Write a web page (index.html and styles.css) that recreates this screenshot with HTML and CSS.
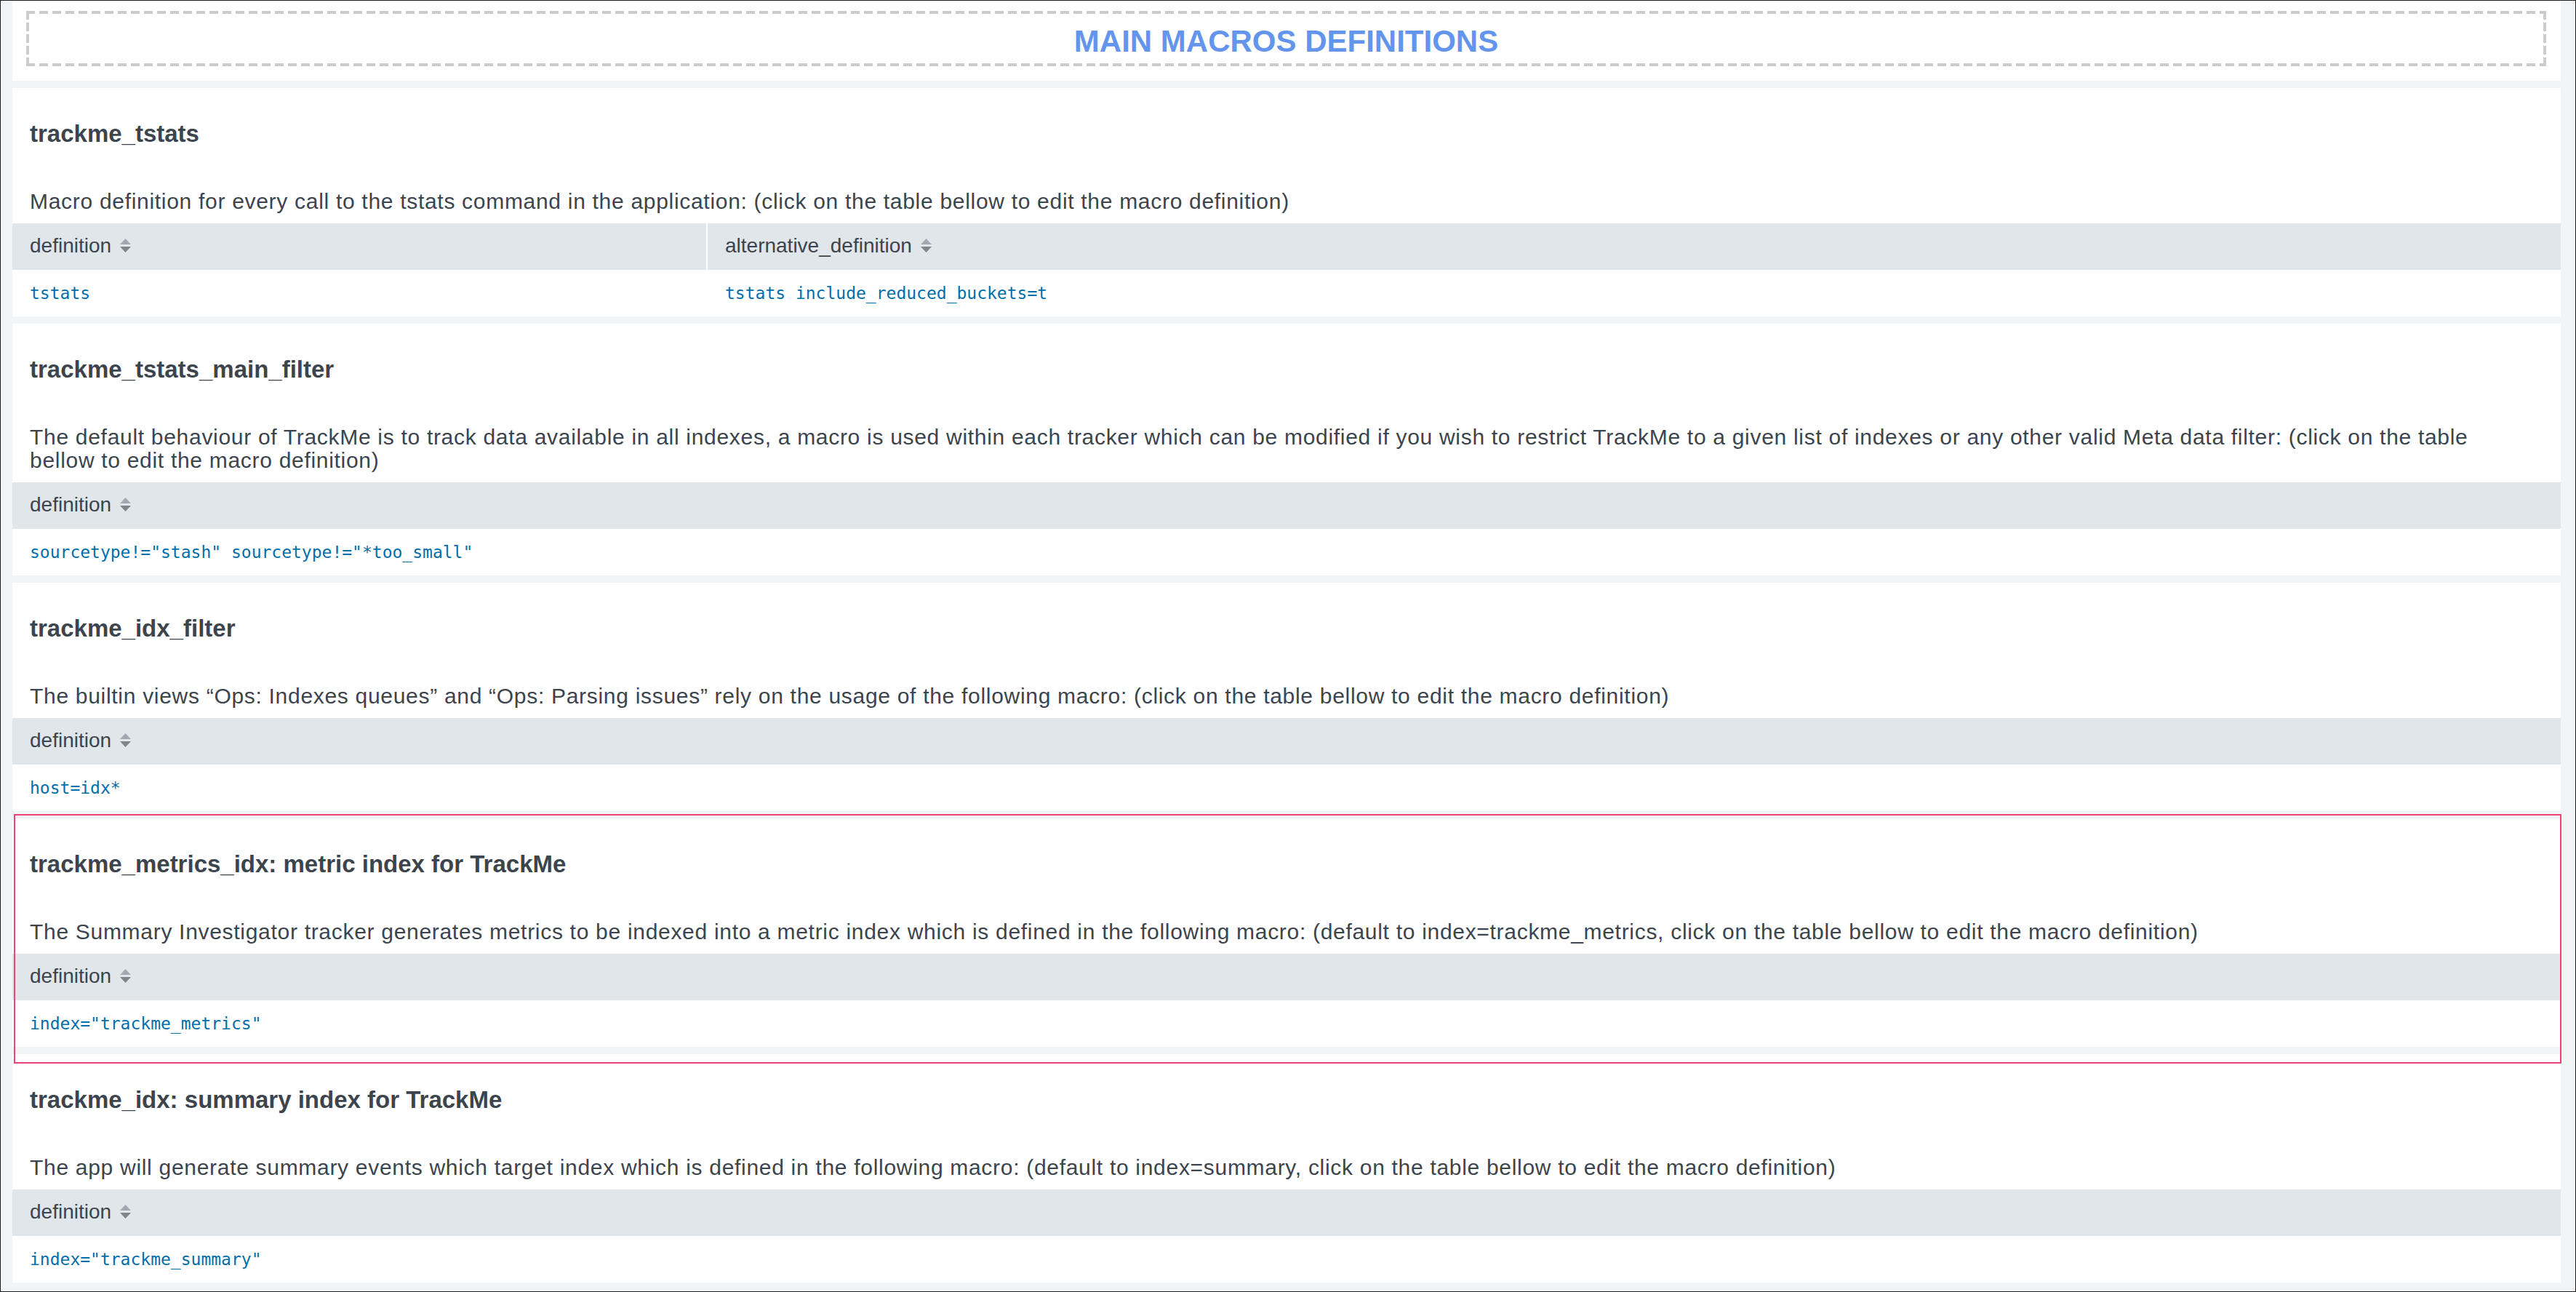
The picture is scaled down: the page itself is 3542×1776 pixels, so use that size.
FILE: index.html
```html
<!DOCTYPE html>
<html lang="en">
<head>
<meta charset="utf-8">
<title>Main macros definitions</title>
<link rel="stylesheet" href="styles.css">
</head>
<body>
<div class="page">
  <section class="panel title-panel">
    <div class="titlebox"><h1 class="title">MAIN MACROS DEFINITIONS</h1></div>
  </section>

  <section class="panel">
    <h2 class="heading">trackme_tstats</h2>
    <p class="desc">Macro definition for every call to the tstats command in the application: (click on the table bellow to edit the macro definition)</p>
    <div class="grid two-col">
      <div class="th">definition<svg class="sort" width="15" height="19" viewBox="0 0 15 19"><path d="M7.5 0L15 8H0Z" class="up"/><path d="M0 11H15L7.5 19Z" class="down"/></svg></div>
      <div class="th th-next">alternative_definition<svg class="sort" width="15" height="19" viewBox="0 0 15 19"><path d="M7.5 0L15 8H0Z" class="up"/><path d="M0 11H15L7.5 19Z" class="down"/></svg></div>
      <div class="td">tstats</div>
      <div class="td td-next">tstats include_reduced_buckets=t</div>
    </div>
  </section>

  <section class="panel">
    <h2 class="heading">trackme_tstats_main_filter</h2>
    <p class="desc">The default behaviour of TrackMe is to track data available in all indexes, a macro is used within each tracker which can be modified if you wish to restrict TrackMe to a given list of indexes or any other valid Meta data filter: (click on the table bellow to edit the macro definition)</p>
    <div class="grid">
      <div class="th">definition<svg class="sort" width="15" height="19" viewBox="0 0 15 19"><path d="M7.5 0L15 8H0Z" class="up"/><path d="M0 11H15L7.5 19Z" class="down"/></svg></div>
      <div class="td">sourcetype!="stash" sourcetype!="*too_small"</div>
    </div>
  </section>

  <section class="panel">
    <h2 class="heading">trackme_idx_filter</h2>
    <p class="desc">The builtin views “Ops: Indexes queues” and “Ops: Parsing issues” rely on the usage of the following macro: (click on the table bellow to edit the macro definition)</p>
    <div class="grid">
      <div class="th">definition<svg class="sort" width="15" height="19" viewBox="0 0 15 19"><path d="M7.5 0L15 8H0Z" class="up"/><path d="M0 11H15L7.5 19Z" class="down"/></svg></div>
      <div class="td">host=idx*</div>
    </div>
  </section>

  <section class="panel highlight">
    <h2 class="heading">trackme_metrics_idx: metric index for TrackMe</h2>
    <p class="desc">The Summary Investigator tracker generates metrics to be indexed into a metric index which is defined in the following macro: (default to index=trackme_metrics, click on the table bellow to edit the macro definition)</p>
    <div class="grid">
      <div class="th">definition<svg class="sort" width="15" height="19" viewBox="0 0 15 19"><path d="M7.5 0L15 8H0Z" class="up"/><path d="M0 11H15L7.5 19Z" class="down"/></svg></div>
      <div class="td">index="trackme_metrics"</div>
    </div>
  </section>

  <section class="panel">
    <h2 class="heading">trackme_idx: summary index for TrackMe</h2>
    <p class="desc">The app will generate summary events which target index which is defined in the following macro: (default to index=summary, click on the table bellow to edit the macro definition)</p>
    <div class="grid">
      <div class="th">definition<svg class="sort" width="15" height="19" viewBox="0 0 15 19"><path d="M7.5 0L15 8H0Z" class="up"/><path d="M0 11H15L7.5 19Z" class="down"/></svg></div>
      <div class="td">index="trackme_summary"</div>
    </div>
  </section>
</div>
</body>
</html>
```

FILE: styles.css
```css
html {
  height: 100%;
}

body {
  margin: 0;
  height: 100vh;
  box-sizing: border-box;
  border: 1px solid #1d1d1d;
  background: #f2f4f5;
  overflow: hidden;
  font-family: "Liberation Sans", Arial, sans-serif;
  color: #3c444d;
}

.page {
  display: flex;
  flex-direction: column;
  gap: 10px;
  padding: 0 20px 0 16px;
}

.panel {
  background: #ffffff;
  padding-top: 43px;
}

.title-panel {
  padding: 14px 20px 20px 19px;
}

.titlebox {
  padding: 18px 4px 10px;
  background:
    repeating-linear-gradient(90deg, #cccccc 0 12px, transparent 12px 18px) left top / 100% 4px no-repeat,
    repeating-linear-gradient(90deg, #cccccc 0 12px, transparent 12px 18px) left bottom / 100% 4px no-repeat,
    repeating-linear-gradient(180deg, #cccccc 0 12px, transparent 12px 16px) left top / 4px 100% no-repeat,
    repeating-linear-gradient(180deg, #cccccc 0 12px, transparent 12px 16px) right top / 4px 100% no-repeat;
}

.title {
  margin: 0;
  text-align: center;
  font-size: 42px;
  line-height: 48px;
  font-weight: 700;
  color: #6495ed;
}

.heading {
  margin: 0 24px;
  font-size: 33px;
  line-height: 40px;
  font-weight: 700;
  color: #3c444d;
}

.desc {
  margin: 57px 64px 14px 24px;
  font-size: 30px;
  line-height: 32px;
  letter-spacing: 0.7px;
  color: #3c444d;
}

.grid {
  display: grid;
  grid-template-columns: 1fr;
}

.grid.two-col {
  grid-template-columns: 954px 1fr;
}

.th {
  height: 64px;
  box-sizing: border-box;
  padding: 0 24px 3px;
  background: #e1e6eb;
  font-size: 28px;
  line-height: 61px;
  white-space: nowrap;
  color: #3c444d;
}

.th-next {
  border-left: 2px solid #ffffff;
}

.sort {
  margin-left: 12px;
  vertical-align: 0;
}

.sort .up {
  fill: #a2a9b0;
}

.sort .down {
  fill: #7d858d;
}

.td {
  height: 64px;
  padding: 0 24px;
  font-family: "DejaVu Sans Mono", "Liberation Mono", monospace;
  font-size: 23px;
  line-height: 64px;
  white-space: nowrap;
  color: #006eaa;
  background: #ffffff;
}

.td-next {
  padding-left: 26px;
}

.highlight {
  position: relative;
}

.highlight::after {
  content: "";
  position: absolute;
  top: -6px;
  bottom: -23px;
  left: 2px;
  right: -1px;
  border: 2px solid #ef4277;
  pointer-events: none;
}
```
